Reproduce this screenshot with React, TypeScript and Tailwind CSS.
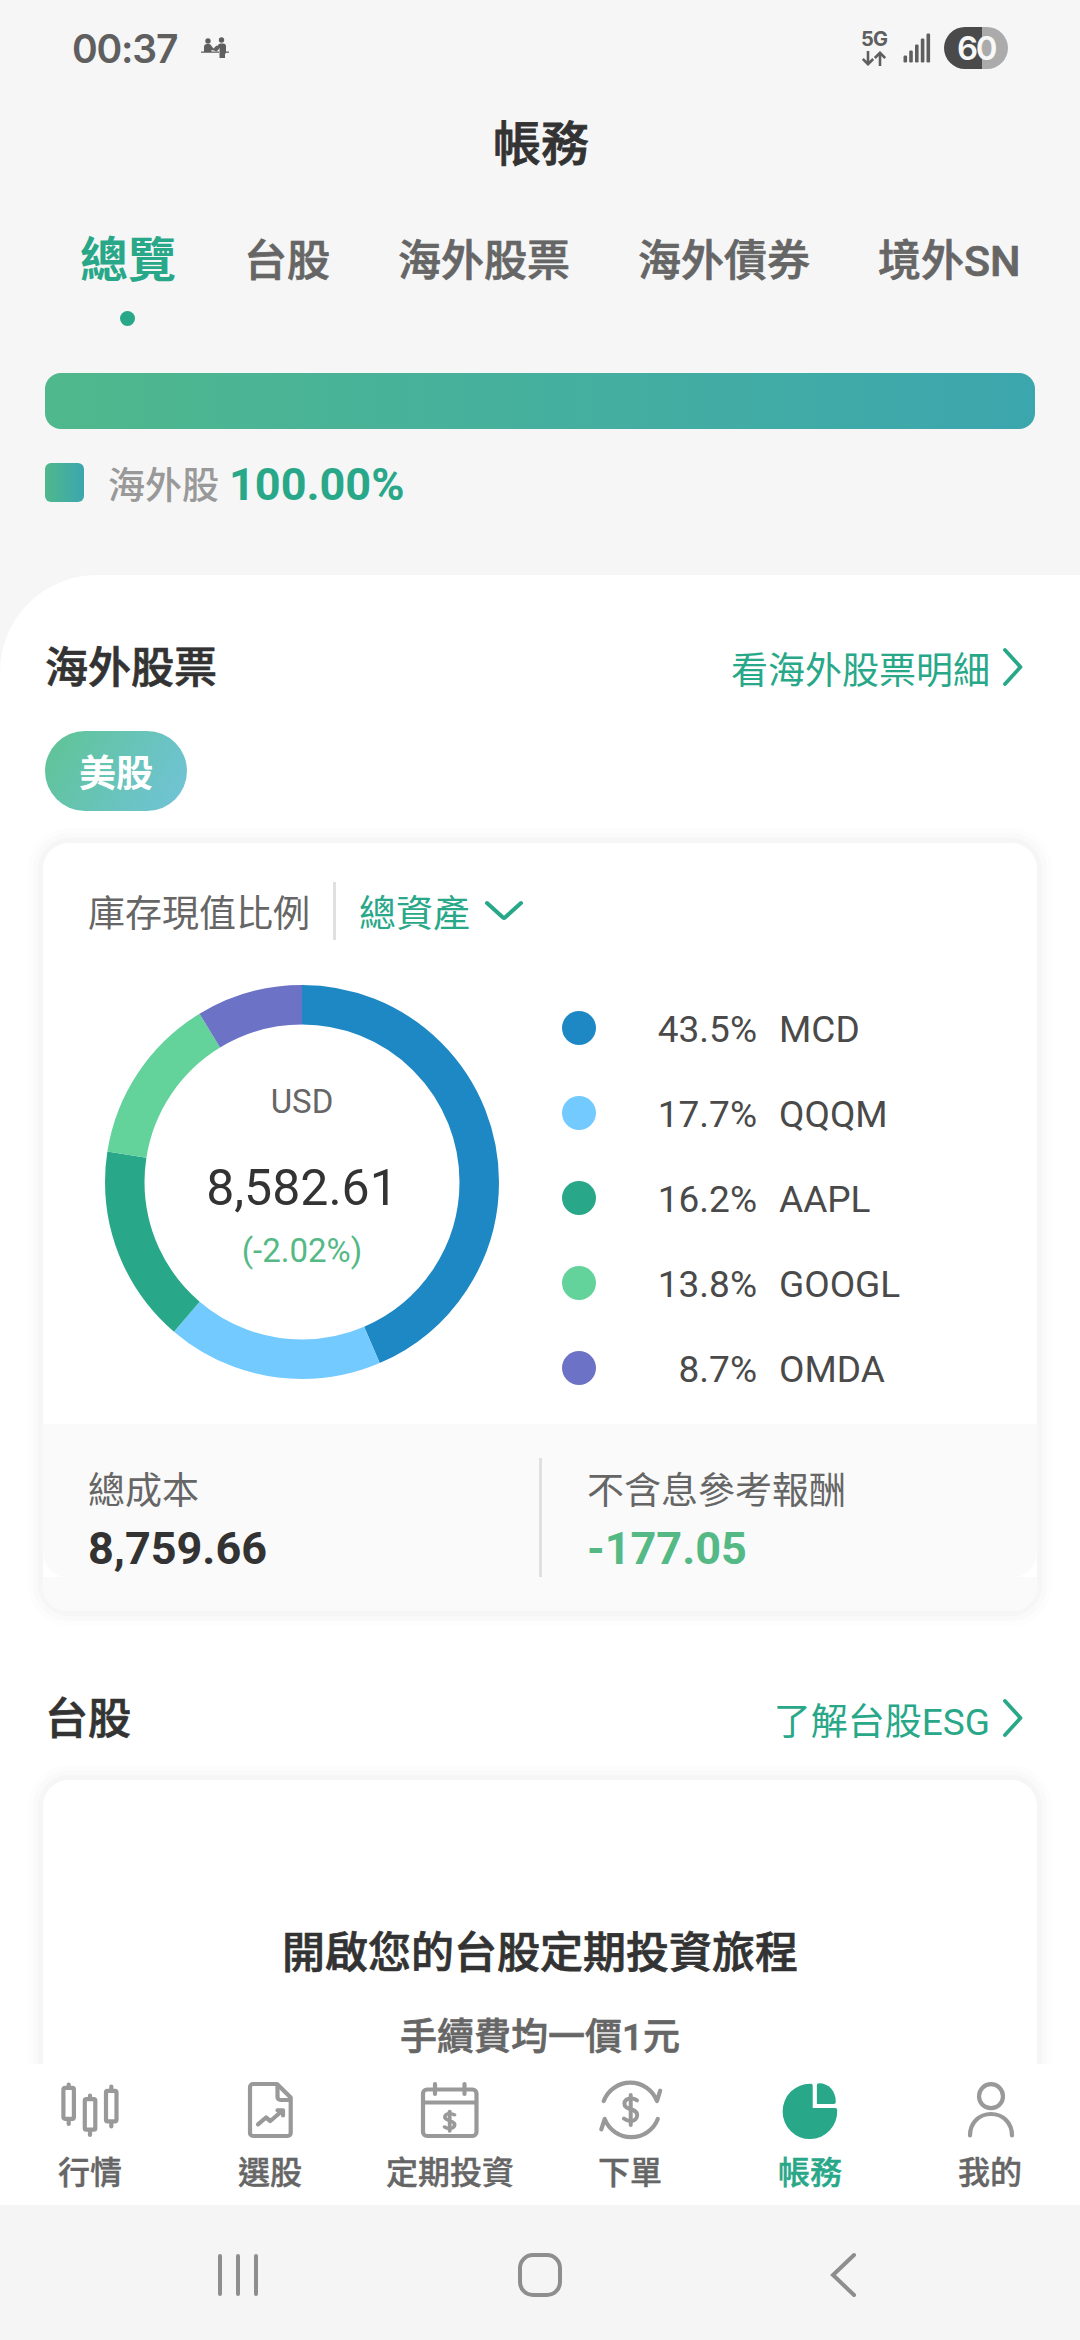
import type { ReactNode } from "react";
import clsx from "clsx";

interface Holding {
  symbol: string;
  percent: number;
  color: string;
}

const holdings: Holding[] = [
  { symbol: "MCD", percent: 43.5, color: "#1e88c4" },
  { symbol: "QQQM", percent: 17.7, color: "#73caff" },
  { symbol: "AAPL", percent: 16.2, color: "#28a888" },
  { symbol: "GOOGL", percent: 13.8, color: "#63d39b" },
  { symbol: "OMDA", percent: 8.7, color: "#6c72c5" },
];

const tabs = ["總覽", "台股", "海外股票", "海外債券", "境外SN"];

const StatusBar = () => (
  <header className="flex h-[96px] shrink-0 items-center pr-[72px] pl-[72px] font-['Inter'] text-[#5f5f5f]">
    <span className="text-[39px] leading-none font-semibold tracking-[-1.200px]">00:37</span>
    <svg className="ml-[23px]" width="30" height="24" viewBox="0 0 30 24" fill="currentColor">
      <circle cx="8" cy="5" r="2.7" />
      <circle cx="21.500" cy="4" r="2.7" />
      <path d="M4 16v-5a3 3 0 0 1 3-3h2a3 3 0 0 1 2.500 2l2 2.500 3-3 .8 1-3 4L11.500 14v2z" />
      <path d="M14 14.500l4-5.500a3 3 0 0 1 2.500-1.500h2.500a3 3 0 0 1 3 3V17l-1 1v4h-5.500v-8l.5-2-3.500 3.500z" />
      <path d="M1 15.500h18v1.300H1zM25 15.500h4v1.300h-4z" />
    </svg>
    <div className="ml-auto flex items-center">
      <div className="flex w-[26px] flex-col items-center gap-[3px]">
        <span className="text-[20px] leading-[17px] font-bold tracking-[-0.800px]">5G</span>
        <svg width="24" height="15" viewBox="0 0 24 15" fill="none" stroke="currentColor" strokeWidth="2.6">
          <path d="M6 0v13M0.800 8L6 13.200 11.200 8M18 15V2M12.800 7L18 1.800 23.200 7" />
        </svg>
      </div>
      <svg className="ml-[16px]" width="28" height="30" viewBox="0 0 28 30" fill="currentColor">
        <rect x="0.500" y="22.500" width="3.600" height="7" rx="1.200" />
        <rect x="6.200" y="17.500" width="3.600" height="12" rx="1.200" />
        <rect x="12" y="11.500" width="3.600" height="18" rx="1.200" />
        <rect x="17.800" y="5.500" width="3.600" height="24" rx="1.200" />
        <rect x="23.500" y="0.500" width="3.600" height="29" rx="1.200" />
      </svg>
      <div className="ml-[13px] flex h-[42px] w-[64px] items-center justify-center rounded-full bg-linear-to-r from-[#4a4a4a] from-59% to-[#ababab] to-59% text-[33px] leading-none font-semibold tracking-[-2.500px] text-[#f8f8f8]">
        60
      </div>
    </div>
  </header>
);

const Tabs = () => (
  <nav className="flex h-[100px] shrink-0 gap-[68px] pl-[80px] whitespace-nowrap">
    {tabs.map((tab, index) => (
      <div key={tab} className="flex h-[98px] flex-col items-center justify-between">
        <span
          className={clsx(
            "relative top-[1px] leading-[64px]",
            index === 0
              ? "text-[48px] font-bold text-[#28a888]"
              : "text-[43px] font-medium text-[#666] [-webkit-text-stroke:0.7px]",
          )}
        >
          {tab}
        </span>
        {index === 0 ? <span className="mr-[1px] size-[15px] rounded-full bg-[#28a888]" /> : null}
      </div>
    ))}
  </nav>
);

const SectionHeader = ({ title, link }: { title: string; link: string }) => (
  <div className="flex h-[64px] items-center justify-between pr-[56px] pl-[45px]">
    <h2 className="relative top-[1px] text-[43px] leading-[64px] font-medium text-[#333] [-webkit-text-stroke:0.7px]">
      {title}
    </h2>
    <a className="flex items-center text-[37px] leading-[64px] text-[#28a888]">
      <span className="relative top-[5px]">{link}</span>
      <svg className="ml-[12px]" width="22" height="40" viewBox="0 0 22 40" fill="none">
        <path
          d="M3 3L18.500 20 3 37"
          stroke="currentColor"
          strokeWidth="3.800"
          strokeLinecap="round"
          strokeLinejoin="round"
        />
      </svg>
    </a>
  </div>
);

const Donut = () => {
  const radius = 177.25;
  let offset = 0;
  return (
    <div className="relative size-[394px]">
      <svg width="394" height="394" viewBox="0 0 394 394" fill="none">
        {holdings.map((item) => {
          const start = offset;
          offset += item.percent;
          return (
            <circle
              key={item.symbol}
              cx="197"
              cy="197"
              r={radius}
              stroke={item.color}
              strokeWidth="39.500"
              pathLength="99.900"
              strokeDasharray={`${item.percent} 99.9`}
              strokeDashoffset={-start}
              transform="rotate(-90 197 197)"
            />
          );
        })}
      </svg>
      <div className="absolute inset-0 flex flex-col items-center pt-[97px]">
        <span className="text-[33px] leading-[40px] text-[#666]">USD</span>
        <span className="mt-[36px] text-[50px] leading-[60px] text-[#333]">8,582.61</span>
        <span className="mt-[13px] text-[33px] leading-[40px] text-[#54b985]">(-2.02%)</span>
      </div>
    </div>
  );
};

const Summary = () => (
  <div>
    <div className="flex rounded-b-[24px] bg-[#fafafa] pt-[34px]">
      <div className="flex h-[119px] w-[499px] flex-col border-r-[3px] border-[#e0e0e0] pl-[45px]">
        <span className="mt-[9px] text-[37px] leading-[50px] text-[#666]">總成本</span>
        <span className="mt-[6px] text-[45px] leading-[52px] font-bold text-[#333]">8,759.66</span>
      </div>
      <div className="flex flex-col pl-[45px]">
        <span className="mt-[9px] text-[37px] leading-[50px] text-[#666]">不含息參考報酬</span>
        <span className="mt-[6px] text-[45px] leading-[52px] font-bold text-[#54b985]">-177.05</span>
      </div>
    </div>
    <div className="h-[34px] rounded-b-[24px] bg-[#fafafa]" />
  </div>
);

const PortfolioCard = () => (
  <section className="mx-[43px] mt-[32px] h-[768px] rounded-[26px] bg-white pt-[39px] shadow-[0_0_0_5px_#f6f6f6,0_0_0_10px_#fafafa,0_0_0_15px_#fdfdfd]">
    <div className="flex h-[58px] items-center pl-[45px] text-[37px] leading-[58px]">
      <span className="relative top-[4px] text-[#666]">庫存現值比例</span>
      <span className="ml-[23px] h-[58px] w-[3px] bg-[#e0e0e0]" />
      <span className="relative top-[4px] ml-[23px] text-[#28a888]">總資產</span>
      <svg className="ml-[14px]" width="40" height="22" viewBox="0 0 40 22" fill="none">
        <path
          d="M3 3L19 17.500q1 .8 2 0L37 3"
          stroke="#28a888"
          strokeWidth="4"
          strokeLinecap="round"
          strokeLinejoin="round"
        />
      </svg>
    </div>
    <div className="flex h-[484px] pt-[45px] pl-[62px]">
      <Donut />
      <ul className="ml-[63px]">
        {holdings.map((item) => (
          <li key={item.symbol} className="flex h-[85px] items-center text-[37px] text-[#4a4a4a]">
            <span className="size-[34px] rounded-full" style={{ backgroundColor: item.color }} />
            <span className="relative top-[2px] w-[161px] text-right">{item.percent}%</span>
            <span className="relative top-[2px] ml-[22px]">{item.symbol}</span>
          </li>
        ))}
      </ul>
    </div>
    <Summary />
  </section>
);

// dollar sign drawn around its own centre
const Dollar = ({ transform, strokeWidth }: { transform: string; strokeWidth: number }) => (
  <g transform={transform} strokeWidth={strokeWidth}>
    <path d="M0 -15V15" />
    <path d="M6.300 -9.700C4.500 -11 2.500 -11.500 0 -11.500C-3.800 -11.500 -6.300 -9.500 -6.300 -6.300C-6.300 1 6.500 -2.500 6.500 5C6.500 9 3.500 11 0 11C-2.600 11 -4.800 10.300 -6.800 8.600" />
  </g>
);

interface NavItemProps {
  label: string;
  active?: boolean;
  children: ReactNode;
}

const NavItem = ({ label, active, children }: NavItemProps) => (
  <div className={clsx("flex w-[180px] flex-col items-center pt-[14px]", active ? "text-[#28a888]" : "text-[#999]")}>
    <svg
      width="72"
      height="64"
      viewBox="0 0 72 64"
      fill="none"
      stroke="currentColor"
      strokeWidth="4.200"
      strokeLinecap="round"
      strokeLinejoin="round"
    >
      {children}
    </svg>
    <span
      className={clsx(
        "mt-[11px] text-[32px] leading-[40px] font-medium [-webkit-text-stroke:0.4px]",
        active ? "text-[#28a888]" : "text-[#666]",
      )}
    >
      {label}
    </span>
  </div>
);

const BottomNav = () => (
  <nav className="flex h-[141px] shrink-0 bg-white">
    <NavItem label="行情">
      <rect x="9.400" y="9.800" width="10.500" height="31" rx="1.500" />
      <path d="M14.700 6.500v3M14.700 42v4" />
      <rect x="30.800" y="21.200" width="10.500" height="30.500" rx="1.500" />
      <path d="M36 17.500v3M36 53v4" />
      <rect x="52" y="12.800" width="10.500" height="30.500" rx="1.500" />
      <path d="M57.300 8.500v3M57.300 45v3.500" />
    </NavItem>
    <NavItem label="選股">
      <path d="M19 6H43L56.700 19.500V55a3 3 0 0 1-3 3H19a3 3 0 0 1-3-3V9a3 3 0 0 1 3-3z" />
      <path d="M43.500 7V19a3 3 0 0 0 3 3H56" />
      <path d="M24 46.300L32 39.500 36.300 43 48 33M43.500 32.300H49V37.500" />
    </NavItem>
    <NavItem label="定期投資">
      <rect x="9" y="11.500" width="53.500" height="46.500" rx="4" />
      <path d="M9 24.500H62M21 6v10M50.500 6v10" />
      <Dollar transform="translate(35.7 43.2) scale(0.76 0.66)" strokeWidth={5} />
    </NavItem>
    <NavItem label="下單">
      <path d="M9.700 23A28.500 28.500 0 0 1 63 23L66.200 12.700" />
      <path d="M63.800 41A28.500 28.500 0 0 1 10.700 41L7.300 51.300" />
      <Dollar transform="translate(36.7 32)" strokeWidth={4} />
    </NavItem>
    <NavItem label="帳務" active>
      <g fill="currentColor" stroke="none">
        <path d="M36.500 5.700a27.300 27.700 0 1 0 26.700 26.500a2 2 0 0 0-2-2.200H38.700V7.700a2 2 0 0 0-2.200-2z" />
        <path d="M42.900 7.300a2 2 0 0 1 2-2C55 5.300 61.800 13 61.800 24a2 2 0 0 1-2 2H42.900z" />
      </g>
    </NavItem>
    <NavItem label="我的">
      <circle cx="37" cy="18.200" r="12" />
      <path d="M16 57.500C16 45 25 36 37 36S58 45 58 57.500" />
    </NavItem>
  </nav>
);

const SystemNav = () => (
  <footer className="flex h-[135px] shrink-0 items-center bg-[#f5f5f5] pt-[4px] pl-[216px]">
    <svg width="44" height="48" viewBox="0 0 44 48" stroke="#8e8e8e" strokeWidth="4" strokeLinecap="round">
      <path d="M4 5v38M22 5v38M40 5v38" />
    </svg>
    <svg className="ml-[256px]" width="48" height="48" viewBox="0 0 48 48" fill="none" stroke="#8e8e8e" strokeWidth="4">
      <rect x="4" y="4" width="40" height="40" rx="13" />
    </svg>
    <svg className="ml-[264px]" width="30" height="48" viewBox="0 0 30 48" fill="none" stroke="#8e8e8e" strokeWidth="4" strokeLinecap="round">
      <path d="M26 4L5 24 26 44" />
    </svg>
  </footer>
);

export default function App() {
  return (
    <div className="flex h-[2340px] w-[1080px] flex-col overflow-hidden bg-[#f6f6f6] font-['Roboto','Noto_Sans_CJK_TC',sans-serif]">
      <StatusBar />
      <h1 className="h-[132px] shrink-0 pt-[17px] pl-[2px] text-center text-[48px] leading-[64px] font-medium text-[#333] [-webkit-text-stroke:0.8px]">
        帳務
      </h1>
      <Tabs />
      <div className="mx-[45px] mt-[45px] h-[56px] shrink-0 rounded-[16px] bg-linear-to-r from-[#4fb88c] to-[#3ca6ae]" />
      <div className="flex h-[146px] shrink-0 items-start pt-[26px] pl-[45px]">
        <span className="mt-[8px] size-[39px] rounded-[6px] bg-linear-to-r from-[#4fb88c] to-[#3ca6ae]" />
        <span className="mt-[2px] ml-[24px] text-[37px] leading-[60px] font-medium text-[#999]">海外股</span>
        <span className="ml-[10px] text-[45px] leading-[60px] font-bold text-[#28a888]">100.00%</span>
      </div>
      <main className="min-h-0 flex-1 overflow-hidden rounded-tl-[97px] bg-white pt-[60px]">
        <SectionHeader title="海外股票" link="看海外股票明細" />
        <span className="mt-[32px] ml-[45px] flex h-[80px] w-[142px] items-center justify-center rounded-full bg-linear-120 from-[#5fc393] to-[#71c3d9] pt-[7px] text-[37px] font-bold text-white">
          美股
        </span>
        <PortfolioCard />
        <div className="h-[75px]" />
        <SectionHeader title="台股" link="了解台股ESG" />
        <section className="mx-[43px] mt-[30px] flex h-[500px] flex-col items-center rounded-[26px] bg-white pt-[141px] shadow-[0_0_0_5px_#f6f6f6,0_0_0_10px_#fafafa,0_0_0_15px_#fdfdfd]">
          <h3 className="text-[43px] leading-[64px] font-medium text-[#333] [-webkit-text-stroke:0.7px]">
            開啟您的台股定期投資旅程
          </h3>
          <p className="mt-[27px] text-[37px] leading-[52px] font-medium text-[#666] [-webkit-text-stroke:0.6px]">
            手續費均一價1元
          </p>
        </section>
      </main>
      <BottomNav />
      <SystemNav />
    </div>
  );
}
